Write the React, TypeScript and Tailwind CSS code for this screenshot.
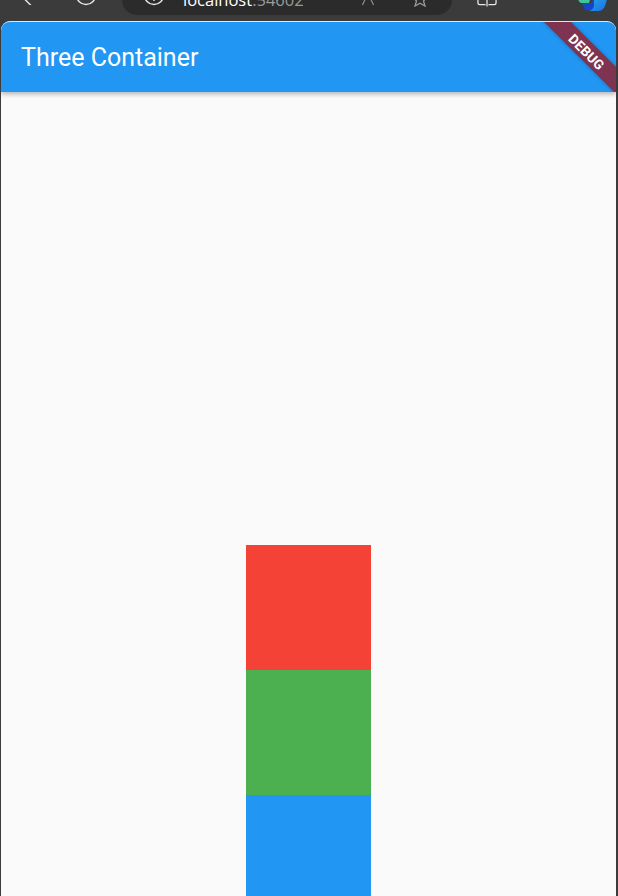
export default function App() {
  return (
    <div className="h-[896px] w-[618px] overflow-hidden bg-[#3b3b3b] flex flex-col font-['Roboto',sans-serif]">
      {/* clipped browser toolbar */}
      <div className="h-[21px] shrink-0 flex items-end overflow-hidden relative">
        <svg width="12" height="20" viewBox="0 0 12 20" fill="none" stroke="#e8e8e8" strokeWidth="1.4" className="ml-[22px] mb-[16px] shrink-0">
          <path d="M3 14.5 L9.5 21" />
        </svg>
        <svg width="22" height="22" viewBox="0 0 22 22" fill="none" stroke="#e8e8e8" strokeWidth="1.4" className="ml-[41px] mb-[15px] shrink-0">
          <circle cx="11" cy="11" r="9.5" />
        </svg>
        <div className="ml-[25px] w-[330px] h-[60px] mb-[6px] shrink-0 rounded-[15px] bg-[#2b2b2b] flex items-end">
          <svg width="22" height="22" viewBox="0 0 22 22" fill="none" stroke="#e8e8e8" strokeWidth="1.4" className="ml-[21px] mb-[9px] shrink-0">
            <circle cx="11" cy="11" r="9.5" />
            <path d="M11 10v7" />
          </svg>
          <div className="ml-[18px] mb-[5px] text-[16.5px] leading-[20px] font-['Open_Sans',sans-serif] whitespace-nowrap text-white">
            localhost<span className="text-[#9a9a9a]">:54602</span>
          </div>
          <svg width="14" height="14" viewBox="0 0 14 14" fill="none" stroke="#8e8e8e" strokeWidth="1.2" className="ml-[57px] mb-[9px] shrink-0">
            <path d="M1.5 13 L7 1 L12.5 13" />
          </svg>
          <svg width="16" height="16" viewBox="0 0 16 16" fill="none" stroke="#9a9a9a" strokeWidth="1.3" className="ml-[37px] mb-[8px] shrink-0">
            <path d="M8 1 L10 6 L15 6.5 L11.5 10 L13 15 L8 12.2 L3 15 L4.5 10 L1 6.5 L6 6 Z" />
          </svg>
        </div>
        <svg width="20" height="16" viewBox="0 0 21 16" fill="none" stroke="#e8e8e8" strokeWidth="1.3" className="ml-[25px] mb-[14px] shrink-0">
          <path d="M9 1 H3 a2 2 0 0 0 -2 2 V12 a2 2 0 0 0 2 2 H9 M12 1 H18 a2 2 0 0 1 2 2 V12 a2 2 0 0 1 -2 2 H12 M10.5 0 V16" />
        </svg>
        <svg width="32" height="12" viewBox="0 0 32 12" className="ml-[80px] mb-[9px] shrink-0">
          <defs>
            <linearGradient id="cb" x1="0" y1="0" x2="1" y2="1">
              <stop offset="0" stopColor="#27a6ef" />
              <stop offset="1" stopColor="#1b6fe0" />
            </linearGradient>
          </defs>
          <path d="M1 -3 H14 L12 3 H4 Q1 2 1 -3 Z" fill="#3fc49a" />
          <path d="M5 3 H14 L18 -3 V9 Q13 11 8 10 Z" fill="#1646c8" />
          <path d="M17 -4 H31 L28 6 Q26 11 21 11 H12 Q16 10 17 6 Z" fill="url(#cb)" />
        </svg>
      </div>

      {/* app window */}
      <div className="mx-[1px] w-[615px] flex-1 min-h-0 flex flex-col bg-[#fafafa] rounded-t-[9px] overflow-hidden">
        <header className="relative z-10 h-[71px] shrink-0 overflow-hidden rounded-t-[9px] border-t border-[#d8e8f4] bg-[#2196f3] shadow-[0_2px_5px_rgba(0,0,0,0.3)] flex items-center pl-[20px] pt-[1px]">
          <h1 className="text-[25px] leading-[28px] font-normal text-white">Three Container</h1>
          <div className="absolute left-[526px] top-[20px] w-[120px] h-[19px] rotate-45 bg-[#7e3350] shadow-[0_0_4px_rgba(0,0,0,0.25)] flex items-center justify-center text-[13.5px] leading-[12px] font-bold tracking-[0.2px] text-white">
            DEBUG
          </div>
        </header>
        <main className="pt-[453px] flex flex-col items-center">
          <div className="w-[125px] h-[125px] shrink-0 bg-[#f44336]" />
          <div className="w-[125px] h-[125px] shrink-0 bg-[#4caf50]" />
          <div className="w-[125px] h-[125px] shrink-0 bg-[#2196f3]" />
        </main>
      </div>
    </div>
  );
}
